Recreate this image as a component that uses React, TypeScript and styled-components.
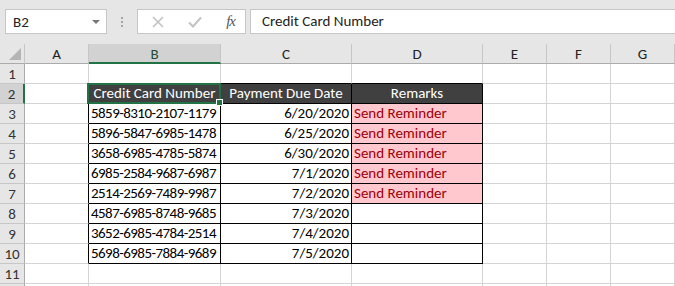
import * as React from 'react';
import styled, { createGlobalStyle } from 'styled-components';

const GlobalStyle = createGlobalStyle`
  html, body {
    margin: 0;
    padding: 0;
    overflow: hidden;
    background: #ffffff;
  }
`;

const FONT = `Carlito, Lato, "Liberation Sans", sans-serif`;
const GREEN = '#217346';
const GRID = '#d4d4d4';

const COLS = [25, 64, 132, 131, 131, 64, 64, 64];
const LETTERS = ['A', 'B', 'C', 'D', 'E', 'F', 'G'];

const Window = styled.div`
  width: 675px;
  height: 286px;
  overflow: hidden;
  background: #e6e6e6;
  font-family: ${FONT};
`;

const Toolbar = styled.div`
  display: flex;
  align-items: flex-start;
  height: 44px;
  padding: 9px 0 0 5px;
  box-sizing: border-box;
`;

const NameBox = styled.div`
  display: flex;
  align-items: center;
  justify-content: space-between;
  width: 102px;
  height: 25px;
  box-sizing: border-box;
  background: #fff;
  border: 1px solid #c6c6c6;
  padding: 0 6px 0 7px;
  font-size: 15px;
  color: #222;
`;

const Caret = styled.span`
  width: 0;
  height: 0;
  border-left: 4px solid transparent;
  border-right: 4px solid transparent;
  border-top: 4px solid #777;
`;

const Grip = styled.div`
  display: flex;
  flex-direction: column;
  gap: 2px;
  width: 30px;
  align-items: center;
  padding-top: 8px;
  & > span {
    width: 2px;
    height: 2px;
    background: #a6a6a6;
  }
`;

const FxButtons = styled.div`
  display: flex;
  align-items: center;
  justify-content: space-between;
  width: 109px;
  height: 25px;
  box-sizing: border-box;
  background: #fff;
  border: 1px solid #c6c6c6;
  padding: 0 10px 0 14px;
`;

const Fx = styled.span`
  font-family: "Liberation Serif", serif;
  font-style: italic;
  font-size: 15px;
  color: #555;
  letter-spacing: -1px;
`;

const FormulaBar = styled.div`
  flex: 1;
  height: 25px;
  margin-left: 4px;
  box-sizing: border-box;
  background: #fff;
  border: 1px solid #c6c6c6;
  border-right: none;
  padding-left: 11px;
  font-size: 15px;
  line-height: 22px;
  color: #222;
`;

const Sheet = styled.div`
  position: relative;
  display: grid;
  grid-template-columns: ${COLS.map((c) => `${c}px`).join(' ')};
  grid-auto-rows: 20px;
  background: #fff;
`;

const Corner = styled.div`
  position: relative;
  background: #e6e6e6;
  border-right: 1px solid #c6c6c6;
  border-bottom: 1px solid #ababab;
  box-sizing: border-box;
  &::after {
    content: '';
    position: absolute;
    right: 3px;
    bottom: 3px;
    width: 0;
    height: 0;
    border-left: 12px solid transparent;
    border-bottom: 12px solid #b4b4b4;
  }
`;

const ColHead = styled.div<{ $active?: boolean }>`
  display: flex;
  align-items: center;
  justify-content: center;
  box-sizing: border-box;
  background: ${(p) => (p.$active ? '#d2d2d2' : '#e6e6e6')};
  border-right: 1px solid #c6c6c6;
  border-bottom: ${(p) => (p.$active ? `2px solid ${GREEN}` : '1px solid #ababab')};
  font-size: 15px;
  color: ${(p) => (p.$active ? '#1f4e34' : '#222')};
  padding-top: 1px;
`;

const RowHead = styled.div<{ $active?: boolean }>`
  display: flex;
  align-items: center;
  justify-content: center;
  box-sizing: border-box;
  background: ${(p) => (p.$active ? '#d2d2d2' : '#e6e6e6')};
  border-right: ${(p) => (p.$active ? `2px solid ${GREEN}` : '1px solid #ababab')};
  border-bottom: 1px solid #c6c6c6;
  font-size: 15px;
  color: #333;
`;

const Cell = styled.div<{
  $bg?: string;
  $color?: string;
  $align?: 'left' | 'right' | 'center';
  $right?: string;
  $bottom?: string;
  $tight?: boolean;
}>`
  box-sizing: border-box;
  overflow: hidden;
  white-space: nowrap;
  background: ${(p) => p.$bg || '#fff'};
  color: ${(p) => p.$color || '#000'};
  text-align: ${(p) => p.$align || 'left'};
  border-right: 1px solid ${(p) => p.$right || GRID};
  border-bottom: 1px solid ${(p) => p.$bottom || GRID};
  font-size: 15px;
  line-height: 19px;
  letter-spacing: ${(p) => (p.$tight ? '-0.55px' : 'normal')};
  padding: 0 2px 0 2px;
`;

const Selection = styled.div`
  position: absolute;
  left: 87px;
  top: 39px;
  width: 134px;
  height: 21px;
  border: 2px solid ${GREEN};
  box-sizing: border-box;
  pointer-events: none;
  &::after {
    content: '';
    position: absolute;
    right: -4px;
    bottom: -4px;
    width: 5px;
    height: 5px;
    background: ${GREEN};
    border: 1px solid #fff;
  }
`;

type CellData = {
  text?: string;
  bg?: string;
  color?: string;
  align?: 'left' | 'right' | 'center';
  tight?: boolean;
};

const cards = [
  ['5859-8310-2107-1179', '6/20/2020', true],
  ['5896-5847-6985-1478', '6/25/2020', true],
  ['3658-6985-4785-5874', '6/30/2020', true],
  ['6985-2584-9687-6987', '7/1/2020', true],
  ['2514-2569-7489-9987', '7/2/2020', true],
  ['4587-6985-8748-9685', '7/3/2020', false],
  ['3652-6985-4784-2514', '7/4/2020', false],
  ['5698-6985-7884-9689', '7/5/2020', false],
] as const;

const buildRow = (r: number): CellData[] => {
  const empty: CellData[] = Array.from({ length: 7 }, () => ({}));
  if (r === 2) {
    const head = { bg: '#404040', color: '#fff', align: 'center' as const };
    empty[1] = { text: 'Credit Card Number', ...head };
    empty[2] = { text: 'Payment Due Date', ...head };
    empty[3] = { text: 'Remarks', ...head };
  } else if (r >= 3 && r <= 10) {
    const [num, date, remind] = cards[r - 3];
    empty[1] = { text: num, tight: true };
    empty[2] = { text: date, align: 'right' };
    empty[3] = remind ? { text: 'Send Reminder', bg: '#ffc7ce', color: '#9c0006' } : {};
  }
  return empty;
};

const inTable = (r: number, c: number) => r >= 2 && r <= 10 && c >= 1 && c <= 3;

const App: React.FC = () => {
  const rows = Array.from({ length: 12 }, (_, i) => i + 1);
  return (
    <Window>
      <GlobalStyle />
      <Toolbar>
        <NameBox>
          B2
          <Caret />
        </NameBox>
        <Grip>
          <span />
          <span />
          <span />
        </Grip>
        <FxButtons>
          <svg width="12" height="12" viewBox="0 0 12 12">
            <path d="M1 1 L11 11 M11 1 L1 11" stroke="#c2c2c2" strokeWidth="1.6" fill="none" />
          </svg>
          <svg width="14" height="12" viewBox="0 0 14 12">
            <path d="M1 6.5 L5 10.5 L13 1.5" stroke="#c2c2c2" strokeWidth="2" fill="none" />
          </svg>
          <Fx>fx</Fx>
        </FxButtons>
        <FormulaBar>Credit Card Number</FormulaBar>
      </Toolbar>
      <Sheet>
        <Corner />
        {LETTERS.map((l) => (
          <ColHead key={l} $active={l === 'B'}>
            {l}
          </ColHead>
        ))}
        {rows.map((r) => (
          <React.Fragment key={r}>
            {/* row 12 only peeks in at the bottom edge, so no label */}
            <RowHead $active={r === 2}>{r <= 11 ? r : ''}</RowHead>
            {buildRow(r).map((cell, c) => {
              const right =
                inTable(r, c) || (c === 0 && r >= 2 && r <= 10) ? '#000' : undefined;
              const bottom =
                inTable(r, c) || (r === 1 && c >= 1 && c <= 3) ? '#000' : undefined;
              return (
                <Cell
                  key={c}
                  $bg={cell.bg}
                  $color={cell.color}
                  $align={cell.align}
                  $right={right}
                  $bottom={bottom}
                  $tight={cell.tight}
                >
                  {cell.text}
                </Cell>
              );
            })}
          </React.Fragment>
        ))}
        <Selection />
      </Sheet>
    </Window>
  );
};

export default App;
